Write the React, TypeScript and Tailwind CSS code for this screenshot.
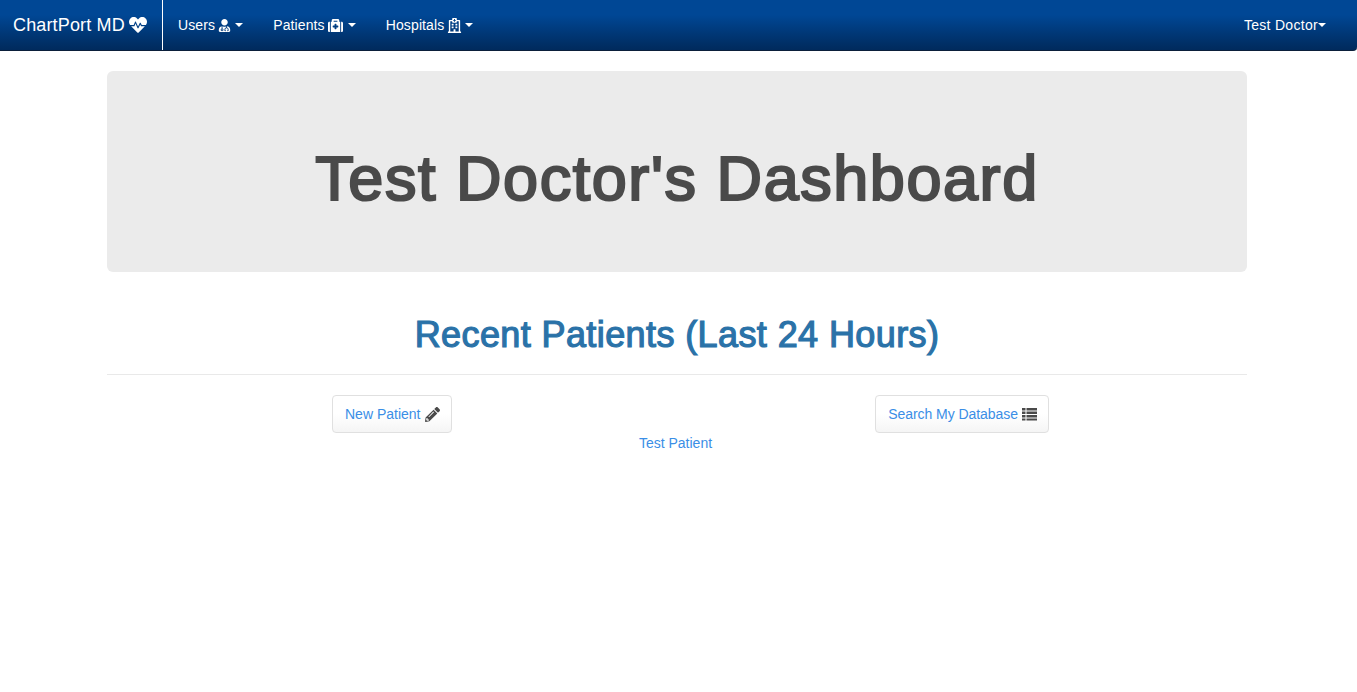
import { FaHeartbeat, FaUserMd, FaMedkit, FaRegHospital, FaPencilAlt } from "react-icons/fa";
import type { ReactNode } from "react";

function Caret({ className = "" }: { className?: string }) {
  return (
    <span
      className={`inline-block w-0 h-0 border-x-4 border-x-transparent border-t-4 border-t-white ${className}`}
    />
  );
}

function NavItem({ label, icon, gap }: { label: string; icon: ReactNode; gap: string }) {
  return (
    <a className="flex items-center px-[15px] text-white text-[14px] tracking-[0.12px]">
      {label}
      <span className="ml-[3px]">{icon}</span>
      <Caret className={gap} />
    </a>
  );
}

function ThList() {
  return (
    <svg width="15" height="14" viewBox="0 0 15 14" fill="#4a4a4a" className="ml-[4px]">
      <rect x="0" y="1" width="3.5" height="2.5" />
      <rect x="4.5" y="1" width="10.5" height="2.5" />
      <rect x="0" y="4.5" width="3.5" height="2.5" />
      <rect x="4.5" y="4.5" width="10.5" height="2.5" />
      <rect x="0" y="8" width="3.5" height="2.5" />
      <rect x="4.5" y="8" width="10.5" height="2.5" />
      <rect x="0" y="11.5" width="3.5" height="2" />
      <rect x="4.5" y="11.5" width="10.5" height="2" />
    </svg>
  );
}

function ActionButton({ children }: { children: ReactNode }) {
  return (
    <button className="flex items-center h-[38px] pl-[12px] pr-[11px] rounded border border-[#e0e0e0] bg-gradient-to-b from-white from-50% to-[#f5f5f5] text-[#3a8ee6] text-[14px]">
      {children}
    </button>
  );
}

export default function App() {
  return (
    <div className="min-h-[692px] bg-white font-['Liberation_Sans',Arial,sans-serif]">
      <nav className="flex justify-between h-[51px] rounded-br bg-gradient-to-b from-[#004795] from-30% to-[#002a5c] border-b border-[#0b1f3a]">
        <div className="flex">
          <a className="flex items-center w-[163px] pl-[13px] border-r border-white text-white text-[18px] tracking-[0.15px]">
            ChartPort MD
            <FaHeartbeat className="ml-[4px] text-[18px]" />
          </a>
          <NavItem label="Users" icon={<FaUserMd className="text-[13px]" />} gap="ml-[4px]" />
          <NavItem label="Patients" icon={<FaMedkit className="text-[15px]" />} gap="ml-[5px]" />
          <NavItem label="Hospitals" icon={<FaRegHospital className="text-[15px]" />} gap="ml-[3px]" />
        </div>
        <a className="flex items-center pr-[31px] text-white text-[14px] tracking-[0.3px]">
          Test Doctor
          <Caret />
        </a>
      </nav>

      <main className="w-[1140px] ml-[107px]">
        <section className="mt-[20px] h-[201px] rounded-md bg-[#ebebeb] flex items-center justify-center">
          <h1 className="pt-[13px] text-[63px] font-normal text-[#4a4a4a] leading-none tracking-[1.55px] [-webkit-text-stroke:2.2px_#4a4a4a]">
            Test Doctor's Dashboard
          </h1>
        </section>

        <h2 className="mt-[41px] text-center text-[36px] font-normal text-[#2a72a8] leading-[44px] tracking-[0.4px] [-webkit-text-stroke:1.2px_#2a72a8]">
          Recent Patients (Last 24 Hours)
        </h2>
        <hr className="mt-[17px] border-[#e9e9e9]" />

        <div className="mt-[20px] flex justify-between pl-[225px] pr-[198px]">
          <ActionButton>
            New Patient
            <FaPencilAlt className="ml-[5px] text-[15px] text-[#4a4a4a]" />
          </ActionButton>
          <ActionButton>
            <span className="tracking-[-0.05px]">Search My Database</span>
            <ThList />
          </ActionButton>
        </div>

        <p className="text-center pr-[3px] text-[14px] leading-[20px] text-[#3a8ee6]">
          Test Patient
        </p>
      </main>
    </div>
  );
}
